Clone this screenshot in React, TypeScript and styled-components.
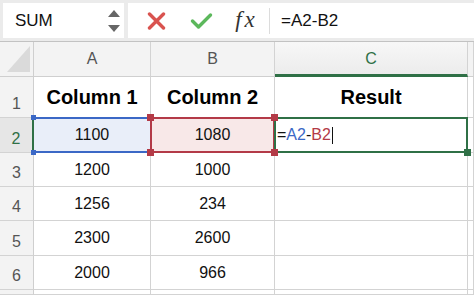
import styled, { createGlobalStyle, css } from 'styled-components';

const GlobalStyle = createGlobalStyle`
  html, body {
    margin: 0;
    padding: 0;
    background: #fff;
    overflow: hidden;
  }
  body {
    font-family: 'Liberation Sans', Arial, sans-serif;
  }
`;

const GREEN = '#2f7046';
const BLUE = '#3b68c6';
const RED = '#b33a47';
const GRID = '#d3d3d3';

const Toolbar = styled.div`
  display: flex;
  gap: 4px;
  height: 42px;
  box-sizing: border-box;
  padding: 3px 0 3px 3px;
  background: #ebebeb;
  border-bottom: 1px solid #c2c2c2;
`;

const NameBox = styled.div`
  width: 121px;
  display: flex;
  align-items: center;
  justify-content: space-between;
  padding: 0 4px 0 12px;
  box-sizing: border-box;
  background: #fff;
  font-size: 17px;
  color: #111;
`;

const FormulaBar = styled.div`
  flex: 1;
  display: flex;
  align-items: center;
  padding-left: 6px;
  background: #fff;
`;

const IconSlot = styled.div`
  width: 45px;
  height: 100%;
  display: flex;
  align-items: center;
  justify-content: center;
`;

const Fx = styled.span`
  font-family: 'Liberation Serif', 'Times New Roman', serif;
  font-style: italic;
  font-size: 23px;
  letter-spacing: 3px;
  color: #333;
  margin-top: -2px;
`;

const Divider = styled.div`
  width: 1px;
  height: 26px;
  background: #dcdcdc;
`;

const FormulaText = styled.span`
  padding-left: 11px;
  font-size: 17px;
  color: #111;
`;

const Sheet = styled.div`
  display: grid;
  grid-template-columns: 34px 117px 124px 193px 1fr;
  grid-template-rows: 35px 41px 35px 34px 34px 35px 34px 5px;
`;

const BaseCell = styled.div`
  position: relative;
  box-sizing: border-box;
  border-right: 1px solid ${GRID};
  border-bottom: 1px solid ${GRID};
  display: flex;
  align-items: center;
  justify-content: center;
`;

const Corner = styled(BaseCell)`
  background: #f3f3f3;
  border-right-color: #cfcfcf;
  border-bottom-color: #cfcfcf;

  &::after {
    content: '';
    position: absolute;
    right: 3px;
    bottom: 4px;
    width: 23px;
    height: 26px;
    background: #dadada;
    clip-path: polygon(100% 0, 100% 100%, 0 100%);
  }
`;

const ColHeader = styled(BaseCell)<{ $active?: boolean }>`
  background: #f3f3f3;
  border-bottom-color: #cfcfcf;
  font-size: 16px;
  color: #555;
  ${(p) =>
    p.$active &&
    css`
      background: linear-gradient(#f7f7f7, #ececec);
      color: ${GREEN};
      border-bottom: 3px solid ${GREEN};
      padding-top: 2px;
    `}
`;

const RowHeader = styled(BaseCell)<{ $active?: boolean }>`
  background: #f3f3f3;
  border-right-color: #cfcfcf;
  align-items: flex-end;
  padding-bottom: 4px;
  font-size: 16px;
  color: #555;
  ${(p) =>
    p.$active &&
    css`
      background: #e6e6e6;
      color: ${GREEN};
      border-right: 2px solid ${GREEN};
    `}
`;

type Sel = 'blue' | 'red' | 'green';

const selStyles: Record<Sel, { bg: string; color: string; sides: string }> = {
  blue: { bg: '#e9eef9', color: BLUE, sides: '2px 0 2px 0' },
  red: { bg: '#f8e8e8', color: RED, sides: '2px' },
  green: { bg: '#fff', color: GREEN, sides: '2px' },
};

const Cell = styled(BaseCell)<{ $bold?: boolean; $sel?: Sel; $left?: boolean }>`
  background: #fff;
  font-size: ${(p) => (p.$bold ? '20px' : '16px')};
  font-weight: ${(p) => (p.$bold ? 700 : 400)};
  color: ${(p) => (p.$bold ? '#000' : '#111')};
  ${(p) => p.$left && 'justify-content: flex-start; padding-left: 2px;'}
  ${(p) =>
    p.$sel &&
    css`
      background: ${selStyles[p.$sel].bg};
      &::after {
        content: '';
        position: absolute;
        inset: -1px;
        border-style: solid;
        border-color: ${selStyles[p.$sel].color};
        border-width: ${selStyles[p.$sel].sides};
        z-index: 2;
        pointer-events: none;
      }
    `}
`;

const Handle = styled.span<{ $color: string; $v: 'top' | 'bottom'; $h: 'left' | 'right'; $size?: number }>`
  position: absolute;
  z-index: 3;
  width: ${(p) => p.$size ?? 7}px;
  height: ${(p) => p.$size ?? 7}px;
  background: ${(p) => p.$color};
  ${(p) => p.$v}: -${(p) => Math.ceil((p.$size ?? 7) / 2)}px;
  ${(p) => p.$h}: -${(p) => Math.ceil((p.$size ?? 7) / 2)}px;
`;

const Ref = styled.span<{ $color: string }>`
  color: ${(p) => p.$color};
`;

const Caret = styled.span`
  display: inline-block;
  width: 1px;
  height: 17px;
  margin-left: 1px;
  background: #111;
`;

const Spinner = () => (
  <svg width="12" height="22" viewBox="0 0 12 22">
    <polygon points="0,7 6,0 12,7" fill="#666" />
    <polygon points="0,15 6,22 12,15" fill="#666" />
  </svg>
);

const CancelIcon = () => (
  <svg width="19" height="18" viewBox="0 0 19 18">
    <path d="M2.5 2 L16.5 16 M16.5 2 L2.5 16" stroke="#d9534f" strokeWidth="3.4" strokeLinecap="round" />
  </svg>
);

const EnterIcon = () => (
  <svg width="23" height="18" viewBox="0 0 23 18">
    <polyline
      points="2.5,9 8.5,15 20.5,3"
      fill="none"
      stroke="#5cb85c"
      strokeWidth="3.4"
      strokeLinecap="round"
      strokeLinejoin="round"
    />
  </svg>
);

const data = [
  ['1200', '1000'],
  ['1256', '234'],
  ['2300', '2600'],
  ['2000', '966'],
];

export default function App() {
  return (
    <>
      <GlobalStyle />
      <Toolbar>
        <NameBox>
          SUM
          <Spinner />
        </NameBox>
        <FormulaBar>
          <IconSlot>
            <CancelIcon />
          </IconSlot>
          <IconSlot>
            <EnterIcon />
          </IconSlot>
          <IconSlot>
            <Fx>fx</Fx>
          </IconSlot>
          <Divider />
          <FormulaText>=A2-B2</FormulaText>
        </FormulaBar>
      </Toolbar>
      <Sheet>
        <Corner />
        <ColHeader>A</ColHeader>
        <ColHeader>B</ColHeader>
        <ColHeader $active>C</ColHeader>
        <ColHeader />

        <RowHeader>1</RowHeader>
        <Cell $bold>Column 1</Cell>
        <Cell $bold>Column 2</Cell>
        <Cell $bold>Result</Cell>
        <Cell />

        <RowHeader $active>2</RowHeader>
        <Cell $sel="blue">
          1100
          <Handle $color={BLUE} $v="top" $h="left" $size={5} />
          <Handle $color={BLUE} $v="bottom" $h="left" $size={5} />
        </Cell>
        <Cell $sel="red">
          1080
          <Handle $color={RED} $v="top" $h="left" />
          <Handle $color={RED} $v="bottom" $h="left" />
          <Handle $color={RED} $v="top" $h="right" />
          <Handle $color={RED} $v="bottom" $h="right" />
        </Cell>
        <Cell $sel="green" $left>
          =<Ref $color={BLUE}>A2</Ref>-<Ref $color={RED}>B2</Ref>
          <Caret />
          <Handle $color={GREEN} $v="bottom" $h="right" />
        </Cell>
        <Cell />

        {data.map(([a, b], i) => (
          <Row key={i} n={i + 3} a={a} b={b} />
        ))}

        <RowHeader />
        <Cell />
        <Cell />
        <Cell />
        <Cell />
      </Sheet>
    </>
  );
}

function Row({ n, a, b }: { n: number; a: string; b: string }) {
  return (
    <>
      <RowHeader>{n}</RowHeader>
      <Cell>{a}</Cell>
      <Cell>{b}</Cell>
      <Cell />
      <Cell />
    </>
  );
}
